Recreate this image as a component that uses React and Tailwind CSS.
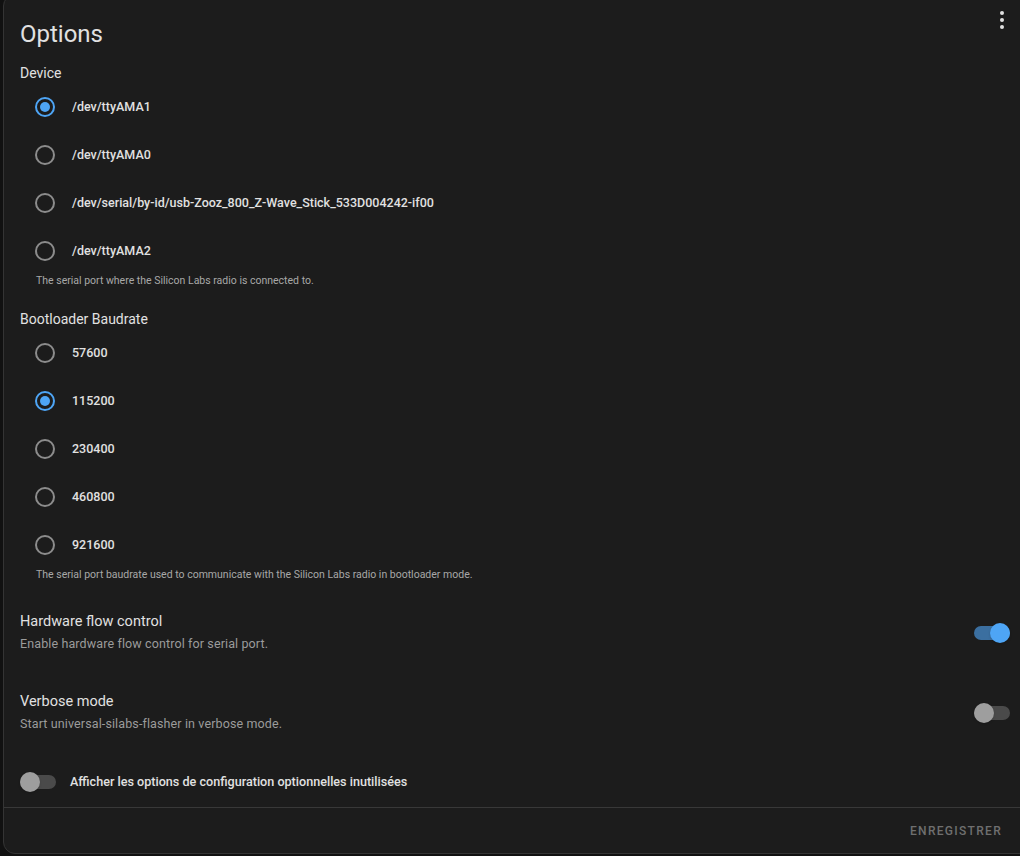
import React, { useState } from "react";

const devices = ["/dev/ttyAMA1", "/dev/ttyAMA0", "/dev/serial/by-id/usb-Zooz_800_Z-Wave_Stick_533D004242-if00", "/dev/ttyAMA2"];
const bauds = ["57600", "115200", "230400", "460800", "921600"];

const Radio = ({ checked, label, onClick }) => (
  <div className="flex items-center h-12 cursor-pointer" onClick={onClick}>
    <div className="w-12 flex justify-center ml-[17px]">
      <div
        className={`w-5 h-5 rounded-full border-2 flex items-center justify-center ${
          checked ? "border-[#4ea5f5]" : "border-[#8c8c8c]"
        }`}
      >
        {checked && <div className="w-[10px] h-[10px] rounded-full bg-[#4ea5f5]"></div>}
      </div>
    </div>
    <span className="ml-[3px] text-[12.5px] font-medium text-[#e1e1e1]">{label}</span>
  </div>
);

const Switch = ({ on, onClick }) => (
  <div className="relative w-[36px] h-5 flex items-center cursor-pointer" onClick={onClick}>
    <div className={`w-[36px] h-[14px] rounded-full ${on ? "bg-[#3b6fa0]" : "bg-[#4a4a4a]"}`}></div>
    <div
      className={`absolute top-0 w-5 h-5 rounded-full shadow ${
        on ? "left-[16px] bg-[#4ea5f5]" : "left-0 bg-[#9e9e9e]"
      }`}
    ></div>
  </div>
);

export default function App() {
  const [device, setDevice] = useState(0);
  const [baud, setBaud] = useState(1);
  const [flow, setFlow] = useState(true);
  const [verbose, setVerbose] = useState(false);
  const [showUnused, setShowUnused] = useState(false);

  return (
    <div className="w-[1020px] h-[856px] overflow-hidden bg-[#111111]" style={{ fontFamily: "Roboto, 'Noto Sans', sans-serif" }}>
      <div className="ml-[3px] -mt-[6px] w-[1030px] h-[860px] rounded-xl border border-[#343434] bg-[#1c1c1c] flex flex-col">
        {/* Header */}
        <div className="flex items-start justify-between pl-[16px] pr-[20px] pt-[23px]">
          <h1 className="text-[24px] leading-8 text-[#e1e1e1]">Options</h1>
          <div className="flex flex-col gap-[3px] -mt-[7px] mr-[8px]">
            <div className="w-[4px] h-[4px] rounded-full bg-[#e1e1e1]"></div>
            <div className="w-[4px] h-[4px] rounded-full bg-[#e1e1e1]"></div>
            <div className="w-[4px] h-[4px] rounded-full bg-[#e1e1e1]"></div>
          </div>
        </div>

        <div className="pl-[16px] pr-[24px] flex flex-col">
          {/* Device */}
          <div className="text-[14px] text-[#e1e1e1] mt-[13px] leading-5">Device</div>
          <div className="-ml-[16px]">
            {devices.map((d, i) => (
              <Radio key={d} label={d} checked={device === i} onClick={() => setDevice(i)} />
            ))}
          </div>
          <div className="text-[10.5px] text-[#a8a8a8] pl-[16px] -mt-[2px] leading-4">
            The serial port where the Silicon Labs radio is connected to.
          </div>

          {/* Baudrate */}
          <div className="text-[14px] text-[#e1e1e1] mt-[20px] leading-5">Bootloader Baudrate</div>
          <div className="-ml-[16px]">
            {bauds.map((b, i) => (
              <Radio key={b} label={b} checked={baud === i} onClick={() => setBaud(i)} />
            ))}
          </div>
          <div className="text-[10.5px] text-[#a8a8a8] pl-[16px] -mt-[2px] leading-4">
            The serial port baudrate used to communicate with the Silicon Labs radio in bootloader mode.
          </div>

          {/* Hardware flow control */}
          <div className="flex items-center justify-between mt-[29px] w-[990px]">
            <div>
              <div className="text-[14.5px] text-[#e1e1e1] leading-5">Hardware flow control</div>
              <div className="text-[12.5px] tracking-[0.12px] text-[#9b9b9b] leading-5 mt-[2px]">
                Enable hardware flow control for serial port.
              </div>
            </div>
            <Switch on={flow} onClick={() => setFlow(!flow)} />
          </div>

          {/* Verbose */}
          <div className="flex items-center justify-between mt-[38px] w-[990px]">
            <div>
              <div className="text-[14.5px] text-[#e1e1e1] leading-5">Verbose mode</div>
              <div className="text-[12.5px] tracking-[0.12px] text-[#9b9b9b] leading-5 mt-[2px]">
                Start universal-silabs-flasher in verbose mode.
              </div>
            </div>
            <Switch on={verbose} onClick={() => setVerbose(!verbose)} />
          </div>

          {/* Unused options */}
          <div className="flex items-center mt-[38px] gap-[14px]">
            <Switch on={showUnused} onClick={() => setShowUnused(!showUnused)} />
            <span className="text-[12.6px] font-medium text-[#e1e1e1]">
              Afficher les options de configuration optionnelles inutilisées
            </span>
          </div>
        </div>

        <div className="mt-[15px] border-t border-[#383838] w-[1016px] flex justify-end pr-[10px] pt-[10px]">
          <button className="text-[12px] font-medium tracking-[1.3px] text-[#6f6f6f] px-2 py-1">ENREGISTRER</button>
        </div>
      </div>
    </div>
  );
}
